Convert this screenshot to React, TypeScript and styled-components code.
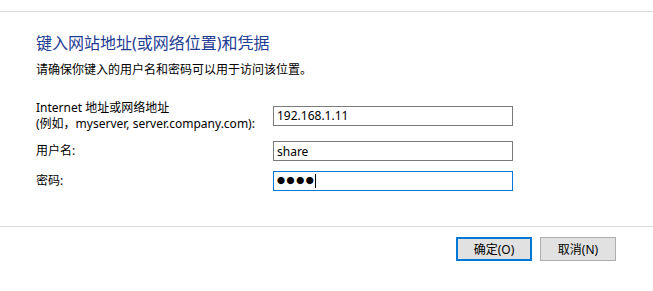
import React from "react";
import styled, { createGlobalStyle } from "styled-components";

const GlobalStyle = createGlobalStyle`
  html, body {
    margin: 0;
    padding: 0;
    background: #ffffff;
  }
  body {
    font-family: "Noto Sans", "Noto Sans CJK SC", sans-serif;
    font-size: 12px;
    color: #000000;
  }
`;

interface FieldProps {
  $focused?: boolean;
}

interface ButtonProps {
  $default?: boolean;
}

const App = () => {
  return (
    <>
      <GlobalStyle />
      <Dialog>
        <Rule />
        <Content>
          <Title>键入网站地址(或网络位置)和凭据</Title>
          <Hint>请确保你键入的用户名和密码可以用于访问该位置。</Hint>
          <Form>
            <Label>
              Internet 地址或网络地址
              <br />
              (例如，myserver, server.company.com):
            </Label>
            <Field>192.168.1.11</Field>
            <Label>用户名:</Label>
            <Field>share</Field>
            <Label>密码:</Label>
            <Field $focused>
              <Dots>●●●●</Dots>
              <Caret />
            </Field>
          </Form>
        </Content>
        <Rule />
        <Footer>
          <Button $default>确定(O)</Button>
          <Button>取消(N)</Button>
        </Footer>
      </Dialog>
    </>
  );
};

const Dialog = styled.div`
  display: flex;
  flex-direction: column;
  width: 653px;
  padding-top: 11px;
`;

const Rule = styled.div`
  height: 1px;
  background: #dadada;
`;

const Content = styled.div`
  display: flex;
  flex-direction: column;
  padding: 20px 0 35px 36px;
`;

const Title = styled.div`
  font-size: 16px;
  line-height: 22px;
  color: #1f3c93;
`;

const Hint = styled.div`
  margin-top: 8px;
  line-height: 16px;
`;

const Form = styled.div`
  display: grid;
  grid-template-columns: 237px 240px;
  row-gap: 10px;
  margin-top: 22px;
  align-items: center;

  & > :first-child {
    align-self: end;
    margin-bottom: -1px;
  }
`;

const Label = styled.div`
  line-height: 16px;
  white-space: nowrap;
`;

const Field = styled.div<FieldProps>`
  display: flex;
  align-items: center;
  box-sizing: border-box;
  height: 20px;
  padding: 0 3px;
  border: 1px solid ${(p) => (p.$focused ? "#0078d7" : "#7a7a7a")};
  background: #ffffff;
  font-size: 12px;
`;

const Dots = styled.span`
  font-size: 8px;
  letter-spacing: 1.6px;
  line-height: 1;
`;

const Caret = styled.span`
  width: 1px;
  height: 14px;
  background: #000000;
`;

const Footer = styled.div`
  display: flex;
  justify-content: flex-end;
  gap: 8px;
  padding: 10px 37px 0 0;
`;

const Button = styled.div<ButtonProps>`
  display: flex;
  align-items: center;
  justify-content: center;
  box-sizing: border-box;
  width: 76px;
  height: 24px;
  background: #e1e1e1;
  border: ${(p) => (p.$default ? "2px solid #0078d7" : "1px solid #adadad")};
  font-size: 12px;
`;

export default App;
